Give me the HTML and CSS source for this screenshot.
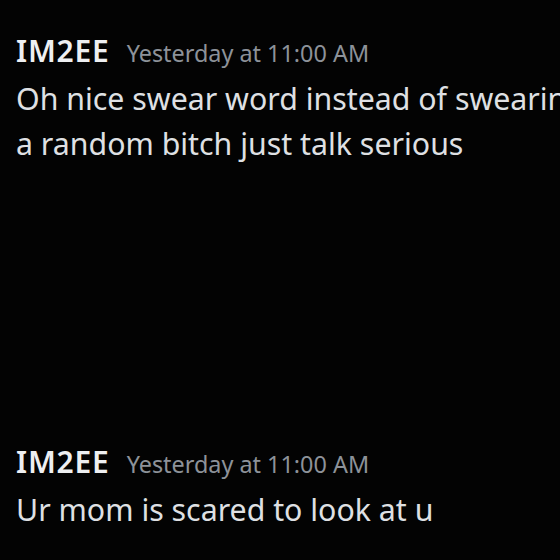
FILE: index.html
```html
<!DOCTYPE html>
<html>
<head>
<meta charset="utf-8">
<link rel="stylesheet" href="styles.css">
</head>
<body>
<div class="chat">
  <div class="msg msg-first">
    <div class="header"><span class="name">IM2EE</span><span class="time">Yesterday at 11:00 AM</span></div>
    <div class="text">Oh nice swear word instead of swearing at<br>a random bitch just talk serious</div>
  </div>
  <div class="msg msg-second">
    <div class="header"><span class="name">IM2EE</span><span class="time">Yesterday at 11:00 AM</span></div>
    <div class="text">Ur mom is scared to look at u</div>
  </div>
</div>
</body>
</html>
```
FILE: styles.css
```css
html, body {
  margin: 0;
  padding: 0;
  background: #030303;
  width: 560px;
  height: 560px;
  overflow: hidden;
}
.chat {
  display: flex;
  flex-direction: column;
  padding: 28px 0 0 16px;
  width: 544px;
  overflow: hidden;
  font-family: "Noto Sans", sans-serif;
}
.msg {
  display: flex;
  flex-direction: column;
}
.msg-second {
  margin-top: 273px;
}
.header {
  display: flex;
  align-items: baseline;
  gap: 17px;
  line-height: 46px;
  white-space: nowrap;
}
.name {
  font-size: 30px;
  font-weight: 600;
  letter-spacing: 0.8px;
  color: #eeeff1;
}
.time {
  font-size: 23.4px;
  color: #8d9299;
}
.text {
  font-size: 30.3px;
  line-height: 45px;
  color: #dfe0e3;
  white-space: nowrap;
  overflow: hidden;
}
```
